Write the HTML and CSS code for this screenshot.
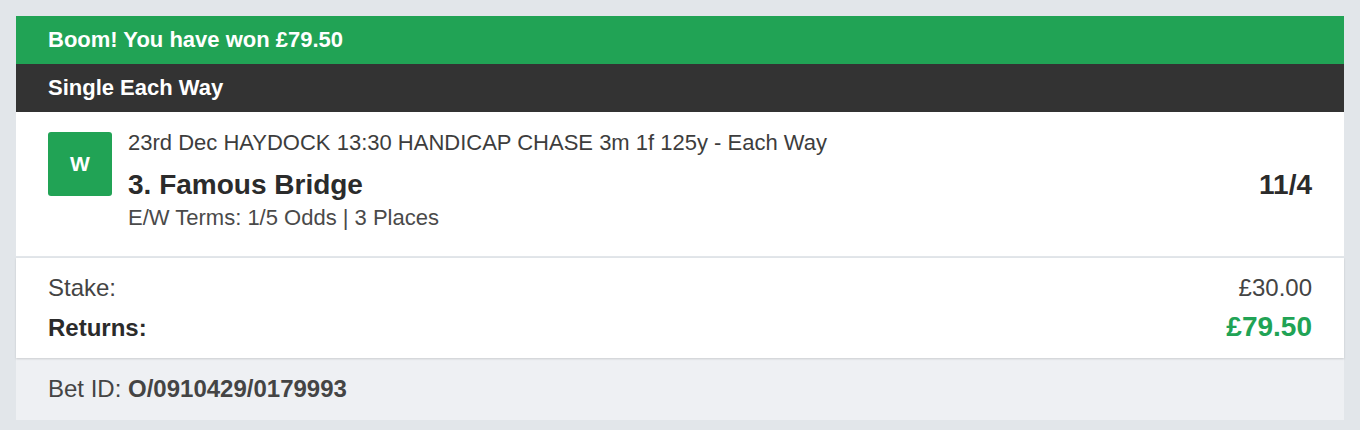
FILE: index.html
```html
<!DOCTYPE html>
<html lang="en">
<head>
  <meta charset="UTF-8">
  <title>Bet Receipt</title>
  <link rel="stylesheet" href="styles.css">
</head>
<body>

  <main class="receipt">
    <header class="win-banner">Boom! You have won £79.50</header>
    <div class="bet-type">Single Each Way</div>

    <!-- Selection -->
    <section class="selection">
      <div class="result-badge">W</div>
      <div class="selection-info">
        <div class="event">23rd Dec HAYDOCK 13:30 HANDICAP CHASE 3m 1f 125y - Each Way</div>
        <div class="runner-row">
          <span class="runner">3. Famous Bridge</span>
          <span class="odds">11/4</span>
        </div>
        <div class="terms">E/W Terms: 1/5 Odds | 3 Places</div>
      </div>
    </section>

    <!-- Stake and returns -->
    <section class="totals">
      <div class="totals-row">
        <span>Stake:</span>
        <span>£30.00</span>
      </div>
      <div class="totals-row returns">
        <span>Returns:</span>
        <span class="returns-value">£79.50</span>
      </div>
    </section>

    <footer class="bet-id">Bet ID:&nbsp;<strong>O/0910429/0179993</strong></footer>
  </main>

</body>
</html>
```

FILE: styles.css
```css
body {
  font-family: 'Liberation Sans', Arial, sans-serif;
  background: #e2e6ea;
  color: #333;
  margin: 0;
  padding: 16px;
}

.receipt {
  background: #fff;
}

.win-banner,
.bet-type {
  height: 48px;
  padding: 0 32px;
  display: flex;
  align-items: center;
  color: #fff;
  font-size: 22px;
  font-weight: 700;
}

.win-banner {
  background: #21a355;
}

.bet-type {
  background: #333;
}

/* Selection block */
.selection {
  display: flex;
  gap: 16px;
  padding: 20px 32px 27px;
  border-bottom: 2px solid #e2e6ea;
}

.result-badge {
  flex: none;
  width: 64px;
  height: 64px;
  border-radius: 3px;
  background: #21a355;
  color: #fff;
  font-size: 21px;
  font-weight: 700;
  display: flex;
  align-items: center;
  justify-content: center;
}

.selection-info {
  flex: 1;
}

.event,
.terms {
  font-size: 22px;
  line-height: 22px;
  color: #3d3d3d;
}

.runner-row {
  display: flex;
  justify-content: space-between;
  align-items: baseline;
  margin-top: 14px;
  font-size: 28px;
  line-height: 34px;
  font-weight: 700;
  color: #2b2b2b;
}

.terms {
  margin-top: 5px;
  color: #4a4a4a;
}

/* Totals */
.totals {
  padding: 16px 32px 14px;
  display: flex;
  flex-direction: column;
  gap: 9px;
  box-shadow: 0 1px 2px rgba(0, 0, 0, 0.15);
  position: relative;
}

.totals-row {
  display: flex;
  justify-content: space-between;
  align-items: baseline;
  font-size: 24px;
  line-height: 28px;
  color: #444;
}

.returns {
  font-weight: 700;
  color: #2b2b2b;
  line-height: 32px;
}

.returns-value {
  font-size: 28px;
  color: #21a355;
}

/* Footer */
.bet-id {
  height: 62px;
  padding: 0 32px;
  display: flex;
  align-items: center;
  background: #eef0f3;
  font-size: 24px;
  color: #444;
}
```
